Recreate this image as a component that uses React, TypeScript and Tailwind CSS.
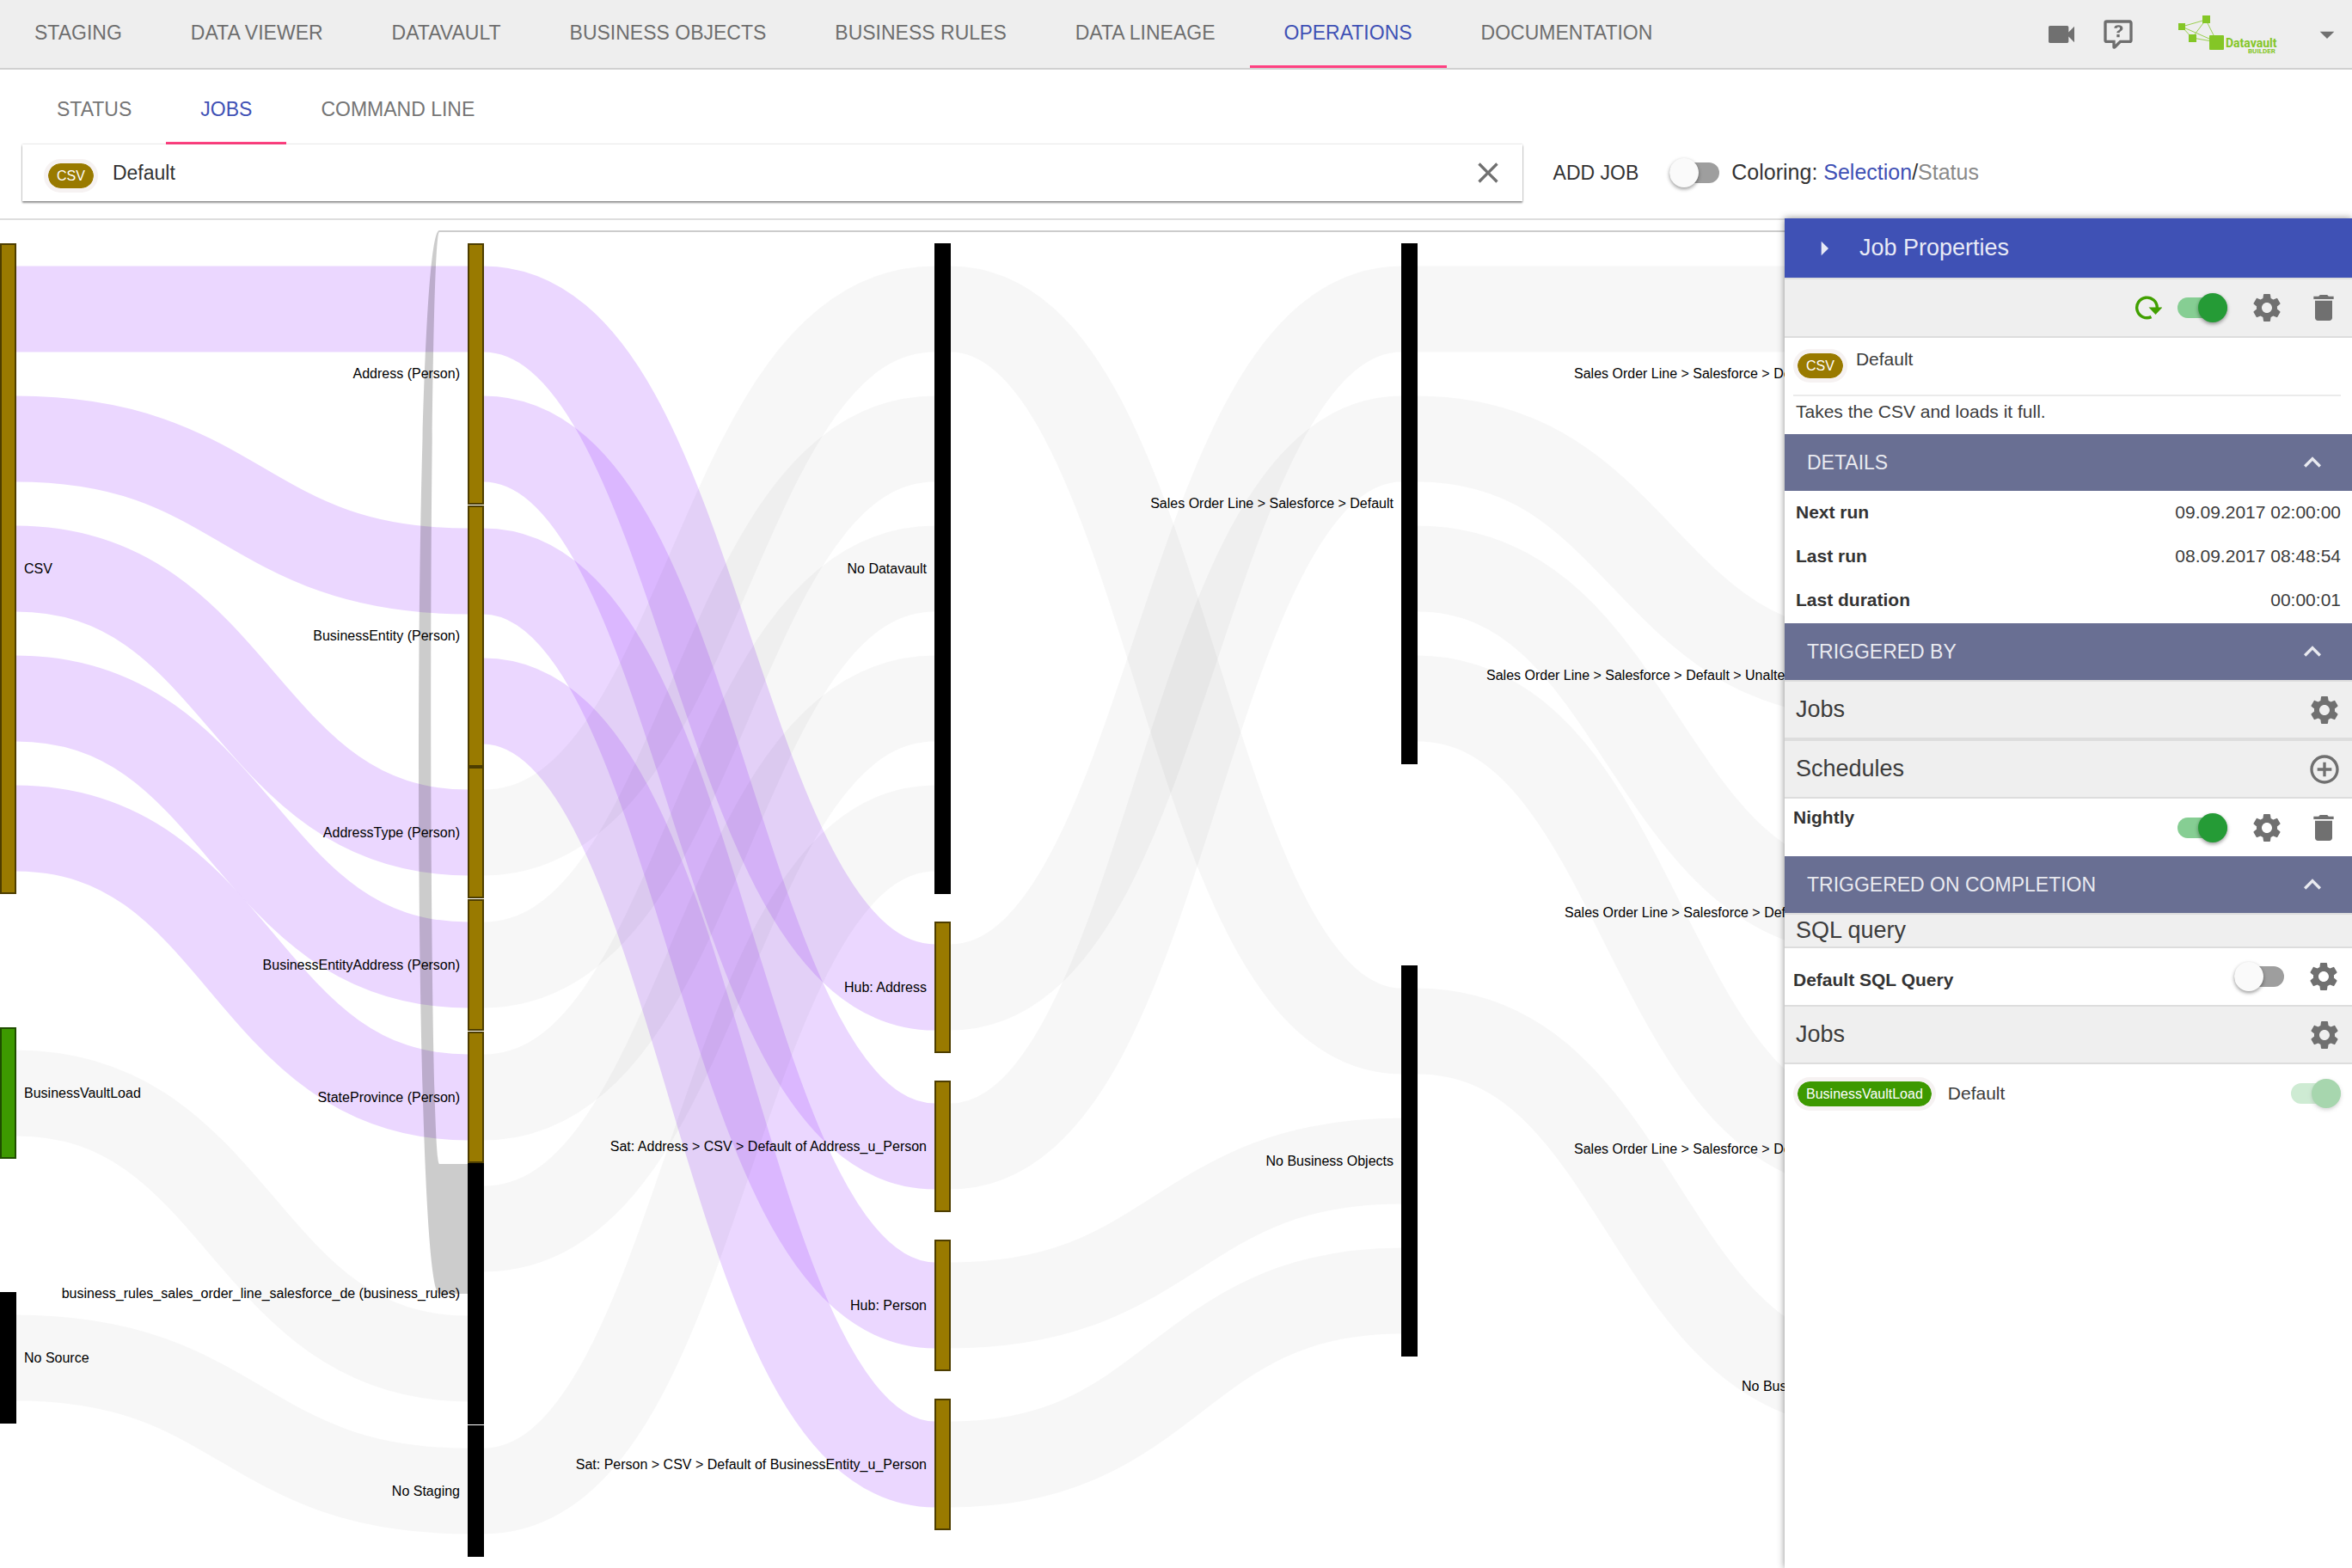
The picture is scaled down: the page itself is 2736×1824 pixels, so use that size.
import { useState } from "react";
import type { ReactNode } from "react";
import clsx from "clsx";
import {
  MdAddCircleOutline,
  MdArrowDropDown,
  MdArrowRight,
  MdClose,
  MdDelete,
  MdKeyboardArrowUp,
  MdSettings,
  MdVideocam,
} from "react-icons/md";

const mainTabs = [
  "STAGING",
  "DATA VIEWER",
  "DATAVAULT",
  "BUSINESS OBJECTS",
  "BUSINESS RULES",
  "DATA LINEAGE",
  "OPERATIONS",
  "DOCUMENTATION",
];

const subTabs = ["STATUS", "JOBS", "COMMAND LINE"];

const details = [
  ["Next run", "09.09.2017 02:00:00"],
  ["Last run", "08.09.2017 08:48:54"],
  ["Last duration", "00:00:01"],
];

/* ---------- Sankey data ---------- */

const UNIT = 151;
const LINK_WIDTH = 100;
const NODE_WIDTH = 17;
const COLUMNS = [1, 545, 1088, 1631, 2174];

type Tone = "csv" | "vault" | "none";
type SankeyNode = { id: string; col: number; y: number; units: number; tone: Tone; label: string; labelX?: number };

const nodes: SankeyNode[] = [
  { id: "csv", col: 0, y: 28, units: 5, tone: "csv", label: "CSV" },
  { id: "bvl", col: 0, y: 940, units: 1, tone: "vault", label: "BusinessVaultLoad" },
  { id: "noSource", col: 0, y: 1248, units: 1, tone: "none", label: "No Source" },

  { id: "address", col: 1, y: 28, units: 2, tone: "csv", label: "Address (Person)" },
  { id: "entity", col: 1, y: 333, units: 2, tone: "csv", label: "BusinessEntity (Person)" },
  { id: "addressType", col: 1, y: 637, units: 1, tone: "csv", label: "AddressType (Person)" },
  { id: "entityAddress", col: 1, y: 791, units: 1, tone: "csv", label: "BusinessEntityAddress (Person)" },
  { id: "province", col: 1, y: 945, units: 1, tone: "csv", label: "StateProvince (Person)" },
  { id: "rules", col: 1, y: 1098, units: 2, tone: "none", label: "business_rules_sales_order_line_salesforce_de (business_rules)" },
  { id: "noStaging", col: 1, y: 1403, units: 1, tone: "none", label: "No Staging" },

  { id: "noVault", col: 2, y: 28, units: 5, tone: "none", label: "No Datavault" },
  { id: "hubAddress", col: 2, y: 817, units: 1, tone: "csv", label: "Hub: Address" },
  { id: "satAddress", col: 2, y: 1002, units: 1, tone: "csv", label: "Sat: Address > CSV > Default of Address_u_Person" },
  { id: "hubPerson", col: 2, y: 1187, units: 1, tone: "csv", label: "Hub: Person" },
  { id: "satPerson", col: 2, y: 1372, units: 1, tone: "csv", label: "Sat: Person > CSV > Default of BusinessEntity_u_Person" },

  { id: "salesLine", col: 3, y: 28, units: 4, tone: "none", label: "Sales Order Line > Salesforce > Default" },
  { id: "noObjects", col: 3, y: 868, units: 3, tone: "none", label: "No Business Objects" },

  { id: "out1", col: 4, y: 28, units: 2, tone: "none", label: "Sales Order Line > Salesforce > Default", labelX: 1831 },
  { id: "out2", col: 4, y: 454, units: 1, tone: "none", label: "Sales Order Line > Salesforce > Default > Unaltered", labelX: 1729 },
  { id: "out3", col: 4, y: 730, units: 1, tone: "none", label: "Sales Order Line > Salesforce > Default", labelX: 1820 },
  { id: "out4", col: 4, y: 1005, units: 1, tone: "none", label: "Sales Order Line > Salesforce > Default", labelX: 1831 },
  { id: "out5", col: 4, y: 1281, units: 1, tone: "none", label: "No Business Rules", labelX: 2026 },
];

// [source, source slot, target, target slot, selected]
const links: [string, number, string, number, boolean][] = [
  ["csv", 0, "address", 0, true],
  ["csv", 1, "entity", 0, true],
  ["csv", 2, "addressType", 0, true],
  ["csv", 3, "entityAddress", 0, true],
  ["csv", 4, "province", 0, true],
  ["bvl", 0, "rules", 1, false],
  ["noSource", 0, "noStaging", 0, false],
  ["address", 0, "hubAddress", 0, true],
  ["address", 1, "satAddress", 0, true],
  ["entity", 0, "hubPerson", 0, true],
  ["entity", 1, "satPerson", 0, true],
  ["addressType", 0, "noVault", 0, false],
  ["entityAddress", 0, "noVault", 1, false],
  ["province", 0, "noVault", 2, false],
  ["rules", 0, "noVault", 3, false],
  ["noStaging", 0, "noVault", 4, false],
  ["noVault", 0, "noObjects", 0, false],
  ["hubAddress", 0, "salesLine", 0, false],
  ["satAddress", 0, "salesLine", 1, false],
  ["hubPerson", 0, "noObjects", 1, false],
  ["satPerson", 0, "noObjects", 2, false],
  ["salesLine", 0, "out1", 0, false],
  ["salesLine", 1, "out2", 0, false],
  ["salesLine", 2, "out3", 0, false],
  ["salesLine", 3, "out4", 0, false],
  ["noObjects", 0, "out5", 0, false],
];

const toneClass: Record<Tone, string> = {
  csv: "fill-[#997a00] stroke-[#4d3d00]",
  vault: "fill-[#3d9900] stroke-[#1f4d00]",
  none: "fill-black stroke-black",
};

function linkPath(source: string, sourceSlot: number, target: string, targetSlot: number) {
  const from = nodes.find((n) => n.id === source)!;
  const to = nodes.find((n) => n.id === target)!;
  const x0 = COLUMNS[from.col] + NODE_WIDTH;
  const x1 = COLUMNS[to.col];
  const y0 = from.y + (sourceSlot + 0.5) * UNIT;
  const y1 = to.y + (targetSlot + 0.5) * UNIT;
  const mid = (x0 + x1) / 2;
  return `M${x0} ${y0}C${mid} ${y0} ${mid} ${y1} ${x1} ${y1}`;
}

function Sankey() {
  return (
    <svg className="block w-full h-[1560px]" role="img" aria-label="Job flow">
      <g fill="none" strokeWidth={LINK_WIDTH}>
        {links.map(([source, s, target, t, selected]) => (
          <path
            key={source + s + target}
            d={linkPath(source, s, target, t)}
            className={selected ? "stroke-[#9b37ff]/20" : "stroke-black/3"}
          />
        ))}
      </g>

      {/* Link that loops back from the last column */}
      <path
        d="M2200 12H511C479 12 479 1249 511 1249H545V1098H511C498 1098 498 14 511 14H2200Z"
        className="fill-black/20"
      />

      {nodes.map((node) => {
        const x = COLUMNS[node.col];
        const height = node.units * UNIT;
        const first = node.col === 0;
        const labelX = node.labelX ?? (first ? x + NODE_WIDTH + 10 : x - 10);
        return (
          <g key={node.id}>
            <rect x={x} y={node.y} width={NODE_WIDTH} height={height} strokeWidth={2} className={toneClass[node.tone]} />
            <text
              x={labelX}
              y={node.y + height / 2}
              dy="5"
              textAnchor={first || node.labelX ? "start" : "end"}
              className="text-[16px] fill-black"
            >
              {node.label}
            </text>
          </g>
        );
      })}
    </svg>
  );
}

/* ---------- Small parts ---------- */

function Toggle({ label, on = false, faded = false }: { label: string; on?: boolean; faded?: boolean }) {
  return (
    <input
      type="checkbox"
      role="switch"
      aria-label={label}
      defaultChecked={on}
      className={clsx(
        "relative shrink-0 appearance-none w-[58px] h-[34px] cursor-pointer",
        "before:absolute before:inset-x-0 before:top-[5px] before:h-6 before:rounded-full before:bg-[#9e9e9e] checked:before:bg-[#86ce93]",
        "after:absolute after:left-0 after:top-0 after:size-[34px] after:rounded-full after:bg-[#fafafa] after:shadow-[0_2px_4px_rgba(0,0,0,0.4)]",
        "checked:after:left-6 checked:after:bg-[#259b36]",
        faded && "opacity-40"
      )}
    />
  );
}

function IconButton({ label, children }: { label: string; children: ReactNode }) {
  return (
    <button type="button" aria-label={label} className="shrink-0 text-[40px] text-[#707070] cursor-pointer">
      {children}
    </button>
  );
}

function Pill({ color, children }: { color: string; children: ReactNode }) {
  return (
    <span className={clsx("shrink-0 rounded-full border-[5px] border-[#f6f2f2] bg-clip-padding px-[10px] text-[16px] leading-[29px] text-white", color)}>
      {children}
    </span>
  );
}

function Section({ title, children }: { title: string; children: ReactNode }) {
  const [open, setOpen] = useState(true);
  return (
    <section>
      <button
        type="button"
        aria-expanded={open}
        onClick={() => setOpen(!open)}
        className="flex w-full h-[66px] items-center justify-between bg-[#696f93] pl-[26px] pr-[26px] text-[23px] text-[#e9eaf0] cursor-pointer"
      >
        {title}
        <MdKeyboardArrowUp className={clsx("size-10", !open && "rotate-180")} />
      </button>
      {open && children}
    </section>
  );
}

function Band({ title, children }: { title: string; children?: ReactNode }) {
  return (
    <div className="flex h-[69px] items-center justify-between border-y-2 border-[#dddddd] bg-[#efefef] pl-[13px] pr-3">
      <h3 className="text-[27px] text-[#3c3c3c]">{title}</h3>
      {children}
    </div>
  );
}

function Logo() {
  return (
    <svg viewBox="0 0 120 48" className="w-[120px] h-12 fill-[#84c626]" role="img" aria-label="Datavault Builder">
      <g className="stroke-[#84c626]" strokeWidth="0.8">
        <path d="M6 15L34 7L47 33L18 28ZM34 7L18 28M6 15L47 33" fill="none" />
      </g>
      <rect x="2" y="11" width="8" height="8" />
      <rect x="30" y="2" width="9" height="9" />
      <rect x="14" y="24" width="9" height="9" />
      <rect x="38" y="25" width="17" height="17" rx="1" />
      <text x="57" y="39" className="font-[Roboto,sans-serif] text-[14px] font-bold">Datavault</text>
      <text x="83" y="46" className="font-[Roboto,sans-serif] text-[8px] font-bold">BUILDER</text>
    </svg>
  );
}

function HelpIcon() {
  return (
    <svg viewBox="0 0 24 24" className="size-10 fill-current">
      <path d="M4,2A2,2 0 0,0 2,4V16A2,2 0 0,0 4,18H8V21A1,1 0 0,0 9,22H9.5C9.75,22 10,21.9 10.2,21.71L13.9,18H20A2,2 0 0,0 22,16V4C22,2.89 21.1,2 20,2H4M4,4H20V16H13.08L10,19.08V16H4V4M12.19,5.5C11.3,5.5 10.59,5.68 10.05,6.04C9.5,6.4 9.22,7 9.27,7.69H11.24C11.24,7.41 11.34,7.2 11.5,7.06C11.7,6.92 11.92,6.85 12.19,6.85C12.5,6.85 12.77,6.93 12.95,7.11C13.13,7.28 13.22,7.5 13.22,7.8C13.22,8.08 13.14,8.33 13,8.54C12.83,8.76 12.62,8.94 12.36,9.08C11.84,9.4 11.5,9.68 11.29,9.92C11.1,10.16 11,10.5 11,11H13C13,10.72 13.05,10.5 13.14,10.32C13.23,10.15 13.4,10 13.66,9.85C14.12,9.64 14.5,9.36 14.79,9C15.08,8.63 15.23,8.24 15.23,7.8C15.23,7.1 14.96,6.54 14.42,6.12C13.88,5.71 13.13,5.5 12.19,5.5M11,12V14H13V12H11Z" />
    </svg>
  );
}

function RunIcon() {
  return (
    <svg viewBox="3 4 32 32" className="size-8">
      <path d="M22.5 30.6A11.8 11.8 0 1 1 29.3 20" fill="none" stroke="#41a000" strokeWidth="3.4" />
      <path d="M19.5 19.5H35.5L27.5 28Z" fill="#41a000" />
    </svg>
  );
}

/* ---------- Page ---------- */

function Header() {
  return (
    <header className="flex items-center justify-between border-b-2 border-[#d0d0d0] bg-[#eeeeee] pr-[9px] text-[#6e6e6e]">
      <nav className="flex">
        {mainTabs.map((tab) => (
          <a
            key={tab}
            href="#"
            className={clsx(
              "flex h-[79px] items-center border-b-3 px-10 text-[23px] whitespace-nowrap",
              tab === "OPERATIONS" ? "border-[#ff4081] text-[#3f51b5]" : "border-transparent"
            )}
          >
            {tab}
          </a>
        ))}
      </nav>
      <div className="flex items-center">
        <IconButton label="Video tutorials">
          <MdVideocam />
        </IconButton>
        <button type="button" aria-label="Help" className="ml-[26px] cursor-pointer">
          <HelpIcon />
        </button>
        <a href="#" className="ml-12 mr-[35px]">
          <Logo />
        </a>
        <IconButton label="Account menu">
          <MdArrowDropDown />
        </IconButton>
      </div>
    </header>
  );
}

function Toolbar() {
  return (
    <div className="border-b-2 border-[#dedede] px-[26px] pt-[9px] pb-5">
      <nav className="flex text-[#757575]">
        {subTabs.map((tab) => (
          <a
            key={tab}
            href="#"
            className={clsx(
              "flex h-[78px] items-center border-b-3 px-10 text-[23px]",
              tab === "JOBS" ? "border-[#ff4081] text-[#3f51b5]" : "border-transparent"
            )}
          >
            {tab}
          </a>
        ))}
      </nav>
      <div className="flex items-center text-[23px] text-[#333333]">
        <div className="flex h-[66px] w-[65%] items-center bg-white pl-[25px] pr-5 shadow-[0_2px_2px_rgba(0,0,0,0.4),0_0_2px_rgba(0,0,0,0.25)]">
          <div className="flex pt-[6px]">
            <Pill color="bg-[#997a00]">CSV</Pill>
          </div>
          <input aria-label="Job" defaultValue="Default" className="ml-[17px] min-w-0 flex-1 outline-none" />
          <IconButton label="Clear">
            <MdClose />
          </IconButton>
        </div>
        <button type="button" className="ml-9 cursor-pointer">
          ADD JOB
        </button>
        <div className="ml-9 flex items-center gap-[14px] text-[25px]">
          <Toggle label="Color by status" />
          <span>
            Coloring: <span className="text-[#3f51b5]">Selection</span>/<span className="text-[#8a8a8a]">Status</span>
          </span>
        </div>
      </div>
    </div>
  );
}

function JobProperties() {
  return (
    <aside className="relative z-10 -mt-[2px] w-[660px] shrink-0 bg-white text-[21px] text-[#3c3c3c] shadow-[0_0_8px_rgba(0,0,0,0.45)]">
      <div className="flex h-[69px] items-center gap-[21px] bg-[#3f51b5] pl-[26px] text-[#e8eaf6]">
        <button type="button" aria-label="Collapse panel" className="cursor-pointer">
          <MdArrowRight className="size-10" />
        </button>
        <h2 className="text-[27px]">Job Properties</h2>
      </div>

      <div className="flex h-[70px] items-center justify-end gap-[26px] border-y-2 border-[#dddddd] bg-[#efefef] pr-[13px]">
        <button type="button" aria-label="Run job" className="-mr-2 cursor-pointer">
          <RunIcon />
        </button>
        <Toggle label="Job enabled" on />
        <IconButton label="Job settings">
          <MdSettings />
        </IconButton>
        <IconButton label="Delete job">
          <MdDelete />
        </IconButton>
      </div>

      <div className="px-[13px]">
        <div className="-ml-[3px] flex h-[68px] items-start gap-[10px] border-b-2 border-[#ebebeb] pt-[13px]">
          <Pill color="bg-[#997a00]">CSV</Pill>
          <span className="leading-6">Default</span>
        </div>
        <p className="h-11 leading-9">Takes the CSV and loads it full.</p>
      </div>

      <Section title="DETAILS">
        <dl className="px-[13px] pb-[1px]">
          {details.map(([name, value]) => (
            <div key={name} className="flex h-[51px] items-start justify-between leading-[49px]">
              <dt className="font-bold text-[#333333]">{name}</dt>
              <dd>{value}</dd>
            </div>
          ))}
        </dl>
      </Section>

      <Section title="TRIGGERED BY">
        <Band title="Jobs">
          <IconButton label="Trigger job settings">
            <MdSettings />
          </IconButton>
        </Band>
        <Band title="Schedules">
          <IconButton label="Add schedule">
            <MdAddCircleOutline />
          </IconButton>
        </Band>
        <div className="flex h-[67px] items-center gap-[26px] pl-[10px] pr-[13px]">
          <span className="flex-1 self-start pt-2 font-bold text-[#333333] leading-7">Nightly</span>
          <Toggle label="Nightly enabled" on />
          <IconButton label="Schedule settings">
            <MdSettings />
          </IconButton>
          <IconButton label="Delete schedule">
            <MdDelete />
          </IconButton>
        </div>
      </Section>

      <Section title="TRIGGERED ON COMPLETION">
        <div className="border-y-2 border-[#dddddd] bg-[#efefef] pl-[13px]">
          <h3 className="text-[27px] leading-[37px]">SQL query</h3>
        </div>
        <div className="flex h-[66px] items-center gap-[26px] pl-[10px] pr-[13px]">
          <span className="flex-1 pt-2 font-bold text-[#333333]">Default SQL Query</span>
          <Toggle label="Default SQL query enabled" />
          <IconButton label="SQL query settings">
            <MdSettings />
          </IconButton>
        </div>
        <Band title="Jobs">
          <IconButton label="Completion job settings">
            <MdSettings />
          </IconButton>
        </Band>
        <div className="flex h-[68px] items-center gap-[14px] pl-[10px] pr-[13px]">
          <Pill color="bg-[#3d9900]">BusinessVaultLoad</Pill>
          <span className="flex-1">Default</span>
          <Toggle label="BusinessVaultLoad enabled" on faded />
        </div>
      </Section>
    </aside>
  );
}

export default function App() {
  return (
    <div className="flex min-h-screen flex-col bg-white font-['Liberation_Sans',Arial,sans-serif]">
      <Header />
      <Toolbar />
      <main className="flex flex-1">
        <div className="min-w-0 flex-1 overflow-hidden">
          <Sankey />
        </div>
        <JobProperties />
      </main>
    </div>
  );
}
